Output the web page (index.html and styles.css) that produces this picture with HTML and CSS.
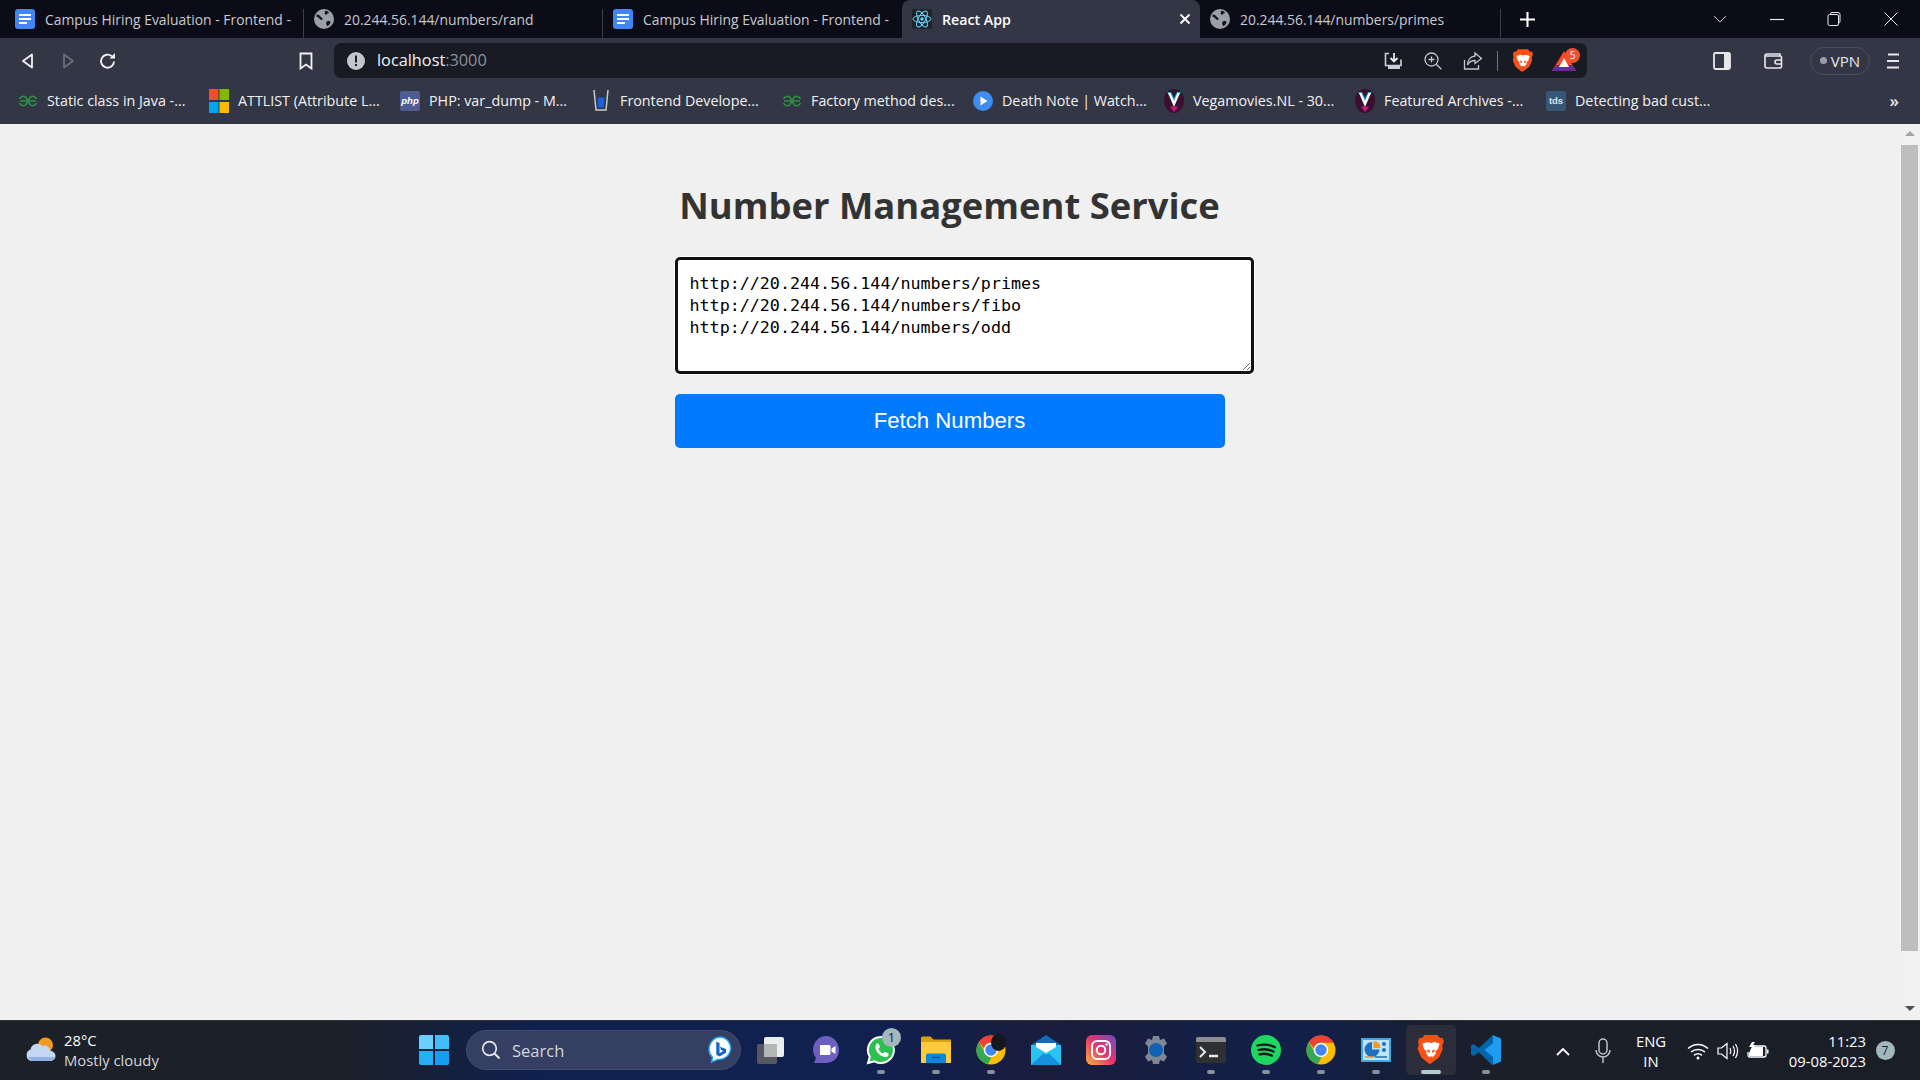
FILE: index.html
```html
<!DOCTYPE html>
<html lang="en">
<head>
  <meta charset="UTF-8">
  <meta name="viewport" content="width=device-width, initial-scale=1.0">
  <title>React App</title>
  <link rel="stylesheet" href="styles.css">
</head>
<body>

  <!-- shared icons -->
  <svg class="sprite" aria-hidden="true">
    <symbol id="i-doc" viewBox="0 0 20 20">
      <rect width="20" height="20" rx="3" fill="#4285f4"/>
      <path d="M4 5h12v2H4zM4 9h12v2H4zM4 13h8v2H4z" fill="#fff"/>
    </symbol>
    <symbol id="i-globe" viewBox="0 0 18 18">
      <circle cx="9" cy="9" r="9" fill="#9aa0a6"/>
      <path d="M2.500 5l2 .5 2 2 1.500 1-1 1.500-1.500-.5-1-1.500-2.500-1.500zM10 1.500l2.500.5 1 1.500-1.500.5-1 1.500-1.500-1zM11 11.500l2.500-1 1.500 1-1 2.500-2 1.500-1-2z" fill="#12141e"/>
    </symbol>
    <symbol id="i-gfg" viewBox="0 0 20 12">
      <path d="M2 6h16M1.500 4a4 4 0 0 1 6.500-1.500l4 7A4 4 0 0 0 18.500 8M18.500 4a4 4 0 0 0-6.500-1.500l-4 7A4 4 0 0 1 1.500 8" fill="none" stroke="#2f8d46" stroke-width="1.700"/>
    </symbol>
    <symbol id="i-vega" viewBox="0 0 20 24">
      <path d="M10 0c6 0 10 4 10 11 0 7-4 13-10 13S0 18 0 11C0 4 4 0 10 0z" fill="#3a1030"/>
      <path d="M3 3l4 0 3 6 3-6 4 0-7 11z" fill="#1f9ed8"/>
      <path d="M4 4h2.500l3.500 8 3.500-8H16l-6 14z" fill="#fff"/>
      <path d="M6 18l4 5 4-5-4-1z" fill="#c2187a"/>
    </symbol>
    <symbol id="i-brave" viewBox="0 0 24 28">
      <path d="M6 0h12l2 2.500 3 .5 1 3-1.500 4 .5 3-3.500 8-7.500 5.500-1 .5-1-.5L3 21-.5 13l1-3L0 6l1-3 3-.5z" fill="#fb4f16"/>
      <path d="M4 8l5-1.500 3 1 3-1L20 8l-1.500 5-2.500 2.500.5 2-3 3.500h-3l-3-3.500.5-2L5.500 13z" fill="#fff"/>
      <path d="M8.500 13.500l2.500 1v2l-2.500-1zM15.500 13.500l-2.500 1v2l2.500-1zM10 20h4l-2 2z" fill="#fb4f16"/>
    </symbol>
    <symbol id="i-chrome" viewBox="0 0 30 30">
      <circle cx="15" cy="15" r="14.500" fill="#fbbc04"/>
      <path d="M15 .5a14.500 14.500 0 0 1 12.600 7.300H15a7.200 7.200 0 0 0-7 5.500L2.800 7A14.500 14.500 0 0 1 15 .5z" fill="#ea4335"/>
      <path d="M2.800 7l6 10.800a7.200 7.200 0 0 0 6.800 4.400l-3.900 7A14.500 14.500 0 0 1 2.800 7z" fill="#34a853"/>
      <circle cx="15" cy="15" r="7.200" fill="#fff"/>
      <circle cx="15" cy="15" r="5.700" fill="#4285f4"/>
    </symbol>
  </svg>

  <header class="browser">
    <div class="tabstrip">
      <div class="tab">
        <svg class="tab-icon"><use href="#i-doc"/></svg>
        <span class="tab-title">Campus Hiring Evaluation - Frontend -</span>
      </div>
      <div class="tab">
        <svg class="tab-icon"><use href="#i-globe"/></svg>
        <span class="tab-title">20.244.56.144/numbers/rand</span>
      </div>
      <div class="tab tab-before-active">
        <svg class="tab-icon"><use href="#i-doc"/></svg>
        <span class="tab-title">Campus Hiring Evaluation - Frontend -</span>
      </div>
      <div class="tab tab-active">
        <svg class="tab-icon" viewBox="0 0 20 20">
          <rect width="20" height="20" rx="2" fill="#20232a"/>
          <g fill="none" stroke="#61dafb" stroke-width="1">
            <ellipse cx="10" cy="10" rx="9" ry="3.600"/>
            <ellipse cx="10" cy="10" rx="9" ry="3.600" transform="rotate(60 10 10)"/>
            <ellipse cx="10" cy="10" rx="9" ry="3.600" transform="rotate(120 10 10)"/>
          </g>
          <circle cx="10" cy="10" r="1.700" fill="#61dafb"/>
        </svg>
        <span class="tab-title">React App</span>
        <svg class="tab-close" viewBox="0 0 12 12"><path d="M1.500 1.500l9 9M10.500 1.500l-9 9" stroke="#fff" stroke-width="1.800"/></svg>
      </div>
      <div class="tab tab-last">
        <svg class="tab-icon"><use href="#i-globe"/></svg>
        <span class="tab-title">20.244.56.144/numbers/primes</span>
      </div>
      <svg class="new-tab" viewBox="0 0 16 16"><path d="M8 0v16M0 8h16" stroke="#fff" stroke-width="2.200"/></svg>
      <div class="window-controls">
        <svg class="win-btn" viewBox="0 0 14 14"><path d="M1 4l6 6 6-6" fill="none" stroke="#c8c8cc" stroke-width="1"/></svg>
        <svg class="win-btn" viewBox="0 0 14 14"><path d="M0 7.500h14" stroke="#e8e8ea" stroke-width="1.200"/></svg>
        <svg class="win-btn" viewBox="0 0 14 14"><path d="M3.500 2.500V2q0-1.500 1.500-1.500h6q2 0 2 2v7q0 1.500-1.500 1.500M2.500 2.500h7.500q1.500 0 1.500 1.500v8q0 1.500-1.500 1.500H2.500Q1 13.500 1 12V4q0-1.500 1.500-1.500z" fill="none" stroke="#e8e8ea" stroke-width="1"/></svg>
        <svg class="win-btn" viewBox="0 0 14 14"><path d="M.5.5l13 13M13.500.5l-13 13" stroke="#e8e8ea" stroke-width="1"/></svg>
      </div>
    </div>

    <div class="toolbar">
      <svg class="tool" viewBox="0 0 20 20"><path d="M14 3.500v13L5 10z" fill="none" stroke="#f2f2f4" stroke-width="1.800" stroke-linejoin="round"/></svg>
      <svg class="tool" viewBox="0 0 20 20"><path d="M6 3.500v13l9-6.500z" fill="none" stroke="#6b6e7a" stroke-width="1.800" stroke-linejoin="round"/></svg>
      <svg class="tool" viewBox="0 0 20 20"><path d="M16 10.500a6.500 6.500 0 1 1-2.200-5.200" fill="none" stroke="#f2f2f4" stroke-width="1.900"/><path d="M11.500 7.500h5.500v-5.500z" fill="#f2f2f4"/></svg>
      <svg class="tool tool-bookmark" viewBox="0 0 20 20"><path d="M4.500 2.500h11v15l-5.500-4-5.500 4z" fill="none" stroke="#f2f2f4" stroke-width="1.800"/></svg>

      <div class="addressbar">
        <svg class="addr-info" viewBox="0 0 18 18"><circle cx="9" cy="9" r="9" fill="#c4c6cc"/><path d="M8 3.500h2v7H8zM8 12h2v2H8z" fill="#181b24"/></svg>
        <span class="addr-url">localhost<span class="addr-port">:3000</span></span>
        <div class="addr-actions">
          <svg class="tool" viewBox="0 0 20 20"><path d="M6 2.500H2.500v12H18v-6" fill="none" stroke="#cfd0d5" stroke-width="1.600"/><path d="M11 2v8M7.500 7l3.500 3.500L14.500 7" fill="none" stroke="#e8e8ea" stroke-width="1.800"/><path d="M5 15h12v3H5z" fill="#cfd0d5"/></svg>
          <svg class="tool" viewBox="0 0 20 20"><circle cx="8.500" cy="8.500" r="6.500" fill="none" stroke="#c4c6cc" stroke-width="1.300"/><path d="M13.300 13.300l5 5M5.500 8.500h6M8.500 5.500v6" stroke="#c4c6cc" stroke-width="1.300"/></svg>
          <svg class="tool" viewBox="0 0 20 20"><path d="M1.500 9v9h14v-4" fill="none" stroke="#c4c6cc" stroke-width="1.300"/><path d="M12 2l6.500 5.500L12 12.500V9.500c-3.500 0-6 1.500-7.500 4.500 0-5 3-8.500 7.500-9z" fill="none" stroke="#c4c6cc" stroke-width="1.300"/></svg>
          <span class="addr-sep"></span>
          <span class="tool"><svg class="brave-small"><use href="#i-brave"/></svg></span>
          <span class="tool bat">
            <svg class="bat-icon" viewBox="0 0 24 20"><path d="M12 0l12 20H0z" fill="#ff4724"/><path d="M0 20l4-6h16l4 6z" fill="#662d91"/><path d="M12 7l5 9H7z" fill="#fff"/></svg>
            <span class="bat-badge">5</span>
          </span>
        </div>
      </div>

      <svg class="tool tool-panel" viewBox="0 0 20 20"><rect x="2" y="2" width="16" height="16" rx="1.500" fill="none" stroke="#e8e8ea" stroke-width="1.800"/><path d="M12 2h6v16h-6z" fill="#e8e8ea"/></svg>
      <svg class="tool tool-wallet" viewBox="0 0 20 20"><path d="M17 4.500V3H4Q2 3 2 5v10q0 2 2 2h13q1.500 0 1.500-1.500v-9Q18.500 5 17 5H2" fill="none" stroke="#e8e8ea" stroke-width="1.600"/><path d="M18 9h-4a2 2 0 0 0 0 4h4" fill="none" stroke="#e8e8ea" stroke-width="1.600"/></svg>
      <div class="vpn"><span class="vpn-dot"></span>VPN</div>
      <svg class="tool tool-menu" viewBox="0 0 20 20"><path d="M5 3.500h11M4 10h12M4 16.500h12" stroke="#e8e8ea" stroke-width="1.800"/></svg>
    </div>

    <div class="bookmarks">
      <a class="bookmark"><svg class="bm-icon bm-gfg"><use href="#i-gfg"/></svg>Static class in Java -...</a>
      <a class="bookmark">
        <svg class="bm-icon" viewBox="0 0 20 24"><path d="M0 0h9.500v11H0z" fill="#f25022"/><path d="M10.500 0H20v11h-9.500z" fill="#7fba00"/><path d="M0 13h9.500v11H0z" fill="#00a4ef"/><path d="M10.500 13H20v11h-9.500z" fill="#ffb900"/></svg>ATTLIST (Attribute L...</a>
      <a class="bookmark"><span class="bm-icon bm-php">php</span>PHP: var_dump - M...</a>
      <a class="bookmark">
        <svg class="bm-icon" viewBox="0 0 20 24"><path d="M3 1l2 20h10l2-20" fill="none" stroke="#c9ccd4" stroke-width="1.500"/><path d="M6.500 8.500h7l-.7 10H7.200z" fill="#1a5fe0"/></svg>Frontend Develope...</a>
      <a class="bookmark"><svg class="bm-icon bm-gfg"><use href="#i-gfg"/></svg>Factory method des...</a>
      <a class="bookmark">
        <svg class="bm-icon" viewBox="0 0 20 20"><circle cx="10" cy="10" r="10" fill="#3f8cf2"/><path d="M7.500 5.500l7 4.500-7 4.500z" fill="#fff"/></svg>Death Note | Watch...</a>
      <a class="bookmark"><svg class="bm-icon"><use href="#i-vega"/></svg>Vegamovies.NL - 30...</a>
      <a class="bookmark"><svg class="bm-icon"><use href="#i-vega"/></svg>Featured Archives -...</a>
      <a class="bookmark"><span class="bm-icon bm-tds">tds</span>Detecting bad cust...</a>
      <span class="bm-more">»</span>
    </div>
  </header>

  <div class="viewport">
    <main class="page">
      <div class="container">
        <h1>Number Management Service</h1>
        <textarea class="urls" spellcheck="false">http://20.244.56.144/numbers/primes
http://20.244.56.144/numbers/fibo
http://20.244.56.144/numbers/odd</textarea>
        <button class="fetch" type="button">Fetch Numbers</button>
      </div>
    </main>
    <div class="scrollbar">
      <span class="arrow-up"></span>
      <span class="thumb"></span>
      <span class="arrow-down"></span>
    </div>
  </div>

  <footer class="taskbar">
    <div class="weather">
      <svg class="weather-icon" viewBox="0 0 32 30">
        <circle cx="21" cy="10" r="7.500" fill="#f29a1f"/>
        <path d="M7 26a6 6 0 0 1-1-11.500A7 7 0 0 1 18 11a6 6 0 0 1 8 5 5 5 0 0 1 0 10z" fill="#c3d6f2"/>
        <path d="M7 26a6 6 0 0 1-3-4h26a5 5 0 0 1-4 4z" fill="#8fb0e6"/>
      </svg>
      <div class="weather-text">
        <span class="temp">28°C</span>
        <span class="cond">Mostly cloudy</span>
      </div>
    </div>

    <svg class="start" viewBox="0 0 30 30">
      <path d="M0 2q0-2 2-2h12v14H0z" fill="#6ad0fb"/>
      <path d="M16 0h12q2 0 2 2v12H16z" fill="#43bdf8"/>
      <path d="M0 16h14v14H2q-2 0-2-2z" fill="#25b0f7"/>
      <path d="M16 16h14v12q0 2-2 2H16z" fill="#1a9cf2"/>
    </svg>

    <div class="search">
      <svg class="search-icon" viewBox="0 0 20 20"><circle cx="8.500" cy="8.500" r="6.800" fill="none" stroke="#e8e8ea" stroke-width="1.700"/><path d="M13.500 13.500l5 5" stroke="#e8e8ea" stroke-width="1.900"/></svg>
      <span class="search-label">Search</span>
      <svg class="bing" viewBox="0 0 26 30">
        <path d="M13 1a12 12 0 0 1 11 15c-1.500 6-7 9.500-13 9l-7 3 1-5A13 13 0 0 1 13 1z" fill="#fff" stroke="#1ea5f5" stroke-width="1.500"/>
        <path d="M9 6l3.500 1.500v11l4-2.500-2.500-1-1-3.500 6.500 2.500v4L12.500 22 9 20z" fill="#1467c8"/>
      </svg>
    </div>

    <div class="tasks">
      <div class="task">
        <svg class="task-icon" viewBox="0 0 30 30">
          <rect x="1" y="9" width="20" height="20" rx="2" fill="#55585e"/>
          <rect x="8" y="2" width="20" height="20" rx="2" fill="#eceded"/>
          <rect x="8" y="9" width="13" height="13" fill="#b5b6b8"/>
        </svg>
      </div>
      <div class="task">
        <svg class="task-icon" viewBox="0 0 30 30">
          <path d="M15 1c7 0 13 6 13 14s-6 13-13 13H3l2-5C3 20 2 18 2 15 2 7 8 1 15 1z" fill="#6d5fbf"/>
          <path d="M9 10h9q1.500 0 1.500 1.500v7q0 1.500-1.500 1.500H9z" fill="#fff"/>
          <path d="M20.500 13.500l4-2.500v8l-4-2.500z" fill="#fff"/>
        </svg>
      </div>
      <div class="task task-open task-badged">
        <svg class="task-icon" viewBox="0 0 30 30">
          <path d="M15 2a13 13 0 1 1-6.500 24.300L2 28l1.800-6.300A13 13 0 0 1 15 2z" fill="#2bc14f" stroke="#fff" stroke-width="2"/>
          <path d="M10.500 8.500l2 0 1.500 3.500-1.500 2c1 2 2.500 3.500 4.500 4.500l2-1.700 3.500 1.700v2c-1 1.500-3 2-5 1.300-4-1.300-7-4.500-8-8.300-.4-2 .5-3.800 1-5z" fill="#fff"/>
        </svg>
        <span class="task-badge">1</span>
        <span class="indicator"></span>
      </div>
      <div class="task task-open">
        <svg class="task-icon" viewBox="0 0 30 30">
          <path d="M0 3q0-1.500 1.500-1.500h8l3 3H30v6H0z" fill="#dca10d"/>
          <path d="M0 7h30v21H0z" fill="#ffcb3d"/>
          <path d="M5 20q0-1.500 1.500-1.500h17Q25 18.500 25 20v8H5z" fill="#0f87d8"/>
          <path d="M11 22.500h8" stroke="#084f93" stroke-width="1.300"/>
        </svg>
        <span class="indicator"></span>
      </div>
      <div class="task task-open">
        <svg class="task-icon"><use href="#i-chrome"/></svg>
        <span class="chrome-blob"></span>
        <span class="indicator"></span>
      </div>
      <div class="task">
        <svg class="task-icon" viewBox="0 0 30 30">
          <path d="M0 10L15 0l15 10v20H0z" fill="#0f6cbd"/>
          <path d="M0 10h30v20H0z" fill="#29c3f2"/>
          <path d="M5 8h20v4l-10 6-10-6z" fill="#fff"/>
          <path d="M0 30l12-11.500 3 1.500 3-1.500L30 30z" fill="#1490df"/>
        </svg>
      </div>
      <div class="task">
        <svg class="task-icon" viewBox="0 0 30 30">
          <defs>
            <linearGradient id="ig" x1="0" y1="1" x2="1" y2="0">
              <stop offset="0" stop-color="#fdb23a"/>
              <stop offset="0.5" stop-color="#e8336e"/>
              <stop offset="1" stop-color="#6b4cc4"/>
            </linearGradient>
          </defs>
          <rect width="30" height="30" rx="6" fill="url(#ig)"/>
          <rect x="6" y="6" width="18" height="18" rx="5" fill="none" stroke="#fff" stroke-width="2"/>
          <circle cx="15" cy="15" r="4.300" fill="none" stroke="#fff" stroke-width="2"/>
          <circle cx="20.500" cy="9.500" r="1.200" fill="#fff"/>
        </svg>
      </div>
      <div class="task">
        <svg class="task-icon" viewBox="0 0 30 30">
          <path d="M12 1h6l1 4 4-1.500 3 5-3 3v7l3 3-3 5-4-1.500-1 4h-6l-1-4-4 1.500-3-5 3-3v-7l-3-3 3-5L11 5z" fill="#7d8894"/>
          <circle cx="15" cy="15" r="7" fill="#0f62b5"/>
        </svg>
      </div>
      <div class="task task-open">
        <svg class="task-icon" viewBox="0 0 30 30">
          <rect y="2" width="30" height="26" rx="2" fill="#2e3033"/>
          <path d="M2 2h26q2 0 2 2v3H0V4q0-2 2-2z" fill="#8b8d90"/>
          <path d="M4 12l5 5-5 5" fill="none" stroke="#e8e8e8" stroke-width="2"/>
          <path d="M13 21h9" stroke="#e8e8e8" stroke-width="2.500"/>
        </svg>
        <span class="indicator"></span>
      </div>
      <div class="task task-open">
        <svg class="task-icon" viewBox="0 0 30 30">
          <circle cx="15" cy="15" r="15" fill="#1ed760"/>
          <path d="M6.500 10.500c6-1.500 12.500-1 17.500 1.800M7.500 15c5-1.300 10.500-.8 15 1.600M8.500 19.300c4.300-1 8.700-.6 12.500 1.400" fill="none" stroke="#10171a" stroke-width="2.300" stroke-linecap="round"/>
        </svg>
        <span class="indicator"></span>
      </div>
      <div class="task task-open">
        <svg class="task-icon"><use href="#i-chrome"/></svg>
        <span class="indicator"></span>
      </div>
      <div class="task task-open">
        <svg class="task-icon" viewBox="0 0 30 30">
          <rect y="3" width="30" height="24" fill="#3fa9e8"/>
          <rect x="2" y="5" width="26" height="20" fill="#bfe4f8"/>
          <path d="M11 7a7.500 7.500 0 1 0 7.500 7.500H11z" fill="#1d6fc0"/>
          <path d="M12.500 6a7 7 0 0 1 7 7h-7z" fill="#f29a1f"/>
          <circle cx="23" cy="9" r="2" fill="#1d6fc0"/>
          <circle cx="23" cy="15" r="2" fill="#1d6fc0"/>
          <path d="M4 22h8" stroke="#f29a1f" stroke-width="1.500"/>
          <path d="M14 22h12" stroke="#1d6fc0" stroke-width="1.500"/>
        </svg>
        <span class="indicator"></span>
      </div>
      <div class="task task-open task-active">
        <svg class="task-icon"><use href="#i-brave"/></svg>
        <span class="indicator"></span>
      </div>
      <div class="task task-open">
        <svg class="task-icon" viewBox="0 0 30 30">
          <path d="M21.500 0L30 3.500v23L21.500 30 8 17l14-11z" fill="#1f9cf0"/>
          <path d="M22 0L8 13 2.500 9 0 10.500v9L2.500 21 8 17l14 13v-8l-8.500-7L22 8z" fill="#0065a9"/>
        </svg>
        <span class="indicator"></span>
      </div>
    </div>

    <div class="tray">
      <svg class="tray-slot tray-chevron" viewBox="0 0 40 14"><path d="M14 11l6-6 6 6" fill="none" stroke="#fff" stroke-width="1.800"/></svg>
      <svg class="tray-slot tray-mic" viewBox="0 0 40 26"><rect x="16" y="1" width="8" height="15" rx="4" fill="none" stroke="#b9c4c8" stroke-width="1.500"/><path d="M13 12a7 7 0 0 0 14 0M20 19v6" fill="none" stroke="#b9c4c8" stroke-width="1.500"/></svg>
      <div class="lang"><span>ENG</span><span>IN</span></div>
      <svg class="tray-icon tray-wifi" viewBox="0 0 22 18"><path d="M1 6.500c6-5.500 14-5.500 20 0M4 10c4-3.500 10-3.500 14 0M7 13.300c2.400-1.900 5.600-1.900 8 0" fill="none" stroke="#fff" stroke-width="1.500"/><circle cx="11" cy="16" r="1.500" fill="#fff"/></svg>
      <svg class="tray-icon" viewBox="0 0 22 18"><path d="M1 6h3.500L10 1.500v15L4.500 12H1z" fill="none" stroke="#fff" stroke-width="1.200"/><path d="M13 6c1 2 1 4 0 6M16 4c1.800 3 1.800 7 0 10M18.500 2c2.700 4.500 2.700 9.500 0 14" fill="none" stroke="#fff" stroke-width="1.200"/></svg>
      <svg class="tray-icon" viewBox="0 0 22 18"><path d="M5 4h12q2 0 2 2v7q0 2-2 2H3q-2 0-2-2v-3" fill="none" stroke="#fff" stroke-width="1.300"/><path d="M2 11l3-6h11v9H2z" fill="#fff"/><path d="M20 7.500h1.500v4H20z" fill="#fff"/><path d="M5 0L2 5h3L3 9l6-6H6l2-3z" fill="#fff"/></svg>
      <div class="clock"><span>11:23</span><span>09-08-2023</span></div>
      <span class="notif">7</span>
    </div>
  </footer>

</body>
</html>
```

FILE: styles.css
```css
* {
  box-sizing: border-box;
}
html, body {
  margin: 0;
  height: 100%;
}
body {
  width: 1920px;
  height: 1080px;
  overflow: hidden;
  display: flex;
  flex-direction: column;
  font-family: "Open Sans", "Noto Sans", sans-serif;
  background: #f0f0f0;
}
svg {
  flex: none;
  display: block;
}
.sprite {
  width: 0;
  height: 0;
}

/* browser chrome */
.browser {
  background: #333644;
  flex: none;
}
.tabstrip {
  height: 38px;
  padding-left: 5px;
  display: flex;
  align-items: center;
  background: #0b0c17;
}
.tab {
  width: 299px;
  height: 38px;
  padding-left: 10px;
  display: flex;
  align-items: center;
  gap: 10px;
  color: #c9cad0;
  font-size: 13.9px;
  position: relative;
}
.tab::after {
  content: "";
  position: absolute;
  right: 0;
  top: 9px;
  bottom: 0;
  width: 1px;
  background: #3c3e4a;
}
.tab-before-active::after,
.tab-active::after {
  display: none;
}
.tab-active {
  width: 298px;
  background: #333644;
  color: #fff;
  font-size: 14.2px;
  font-weight: 600;
  border-radius: 8px 8px 0 0;
}
.tab-last {
  width: 301px;
}
.tab-icon {
  width: 20px;
  height: 20px;
}
.tab-title {
  white-space: nowrap;
  overflow: hidden;
}
.tab-close {
  width: 12px;
  height: 12px;
  margin-left: auto;
  margin-right: 9px;
}
.new-tab {
  width: 15px;
  height: 15px;
  margin-left: 19px;
}
.window-controls {
  margin-left: auto;
  display: flex;
  align-items: center;
  gap: 43px;
  padding-right: 22px;
}
.win-btn {
  width: 14px;
  height: 14px;
}

.toolbar {
  height: 44px;
  padding: 5px 0 4px 8px;
  display: flex;
  align-items: center;
}
.tool {
  width: 40px;
  height: 20px;
  display: flex;
  justify-content: center;
  align-items: center;
  position: relative;
}
.tool-bookmark {
  margin-left: 158px;
}
.addressbar {
  width: 1253px;
  height: 35px;
  margin-left: 8px;
  padding: 0 3px 0 13px;
  display: flex;
  align-items: center;
  background: #181b24;
  border-radius: 7px;
}
.addr-info {
  width: 18px;
  height: 18px;
}
.addr-url {
  margin: -2px 0 0 12px;
  font-size: 16.3px;
  color: #f2f2f4;
}
.addr-port {
  color: #8d8f98;
}
.addr-actions {
  margin-left: auto;
  display: flex;
  align-items: center;
}
.addr-sep {
  width: 1px;
  height: 20px;
  margin: 0 5px 0 4px;
  background: #70727c;
}
.brave-small {
  width: 20px;
  height: 24px;
}
.bat {
  margin-left: 1.500px;
}
.bat-icon {
  width: 24px;
  height: 20px;
}
.bat-badge {
  position: absolute;
  top: -3px;
  right: 4px;
  width: 15px;
  height: 15px;
  border-radius: 50%;
  background: #f0502c;
  color: #fff;
  font-size: 10px;
  line-height: 15px;
  text-align: center;
}
.tool-panel {
  margin-left: 115px;
}
.tool-wallet {
  margin-left: 11px;
}
.vpn {
  width: 60px;
  height: 28px;
  margin-left: 17px;
  display: flex;
  align-items: center;
  justify-content: center;
  gap: 4px;
  border: 1.500px solid #4c4f5e;
  border-radius: 14px;
  color: #e8e8ea;
  font-size: 15px;
}
.vpn-dot {
  width: 7px;
  height: 7px;
  border-radius: 50%;
  background: #9a9ca6;
}
.tool-menu {
  margin-left: 3px;
}

.bookmarks {
  height: 42px;
  padding: 0 21px 5px 18px;
  display: flex;
  align-items: center;
}
.bookmark {
  width: 191px;
  display: flex;
  align-items: center;
  gap: 9px;
  color: #f2f2f4;
  font-size: 14.3px;
  white-space: nowrap;
}
.bm-icon {
  width: 20px;
  height: 24px;
  flex: none;
}
.bm-gfg {
  height: 12px;
}
.bm-php, .bm-tds {
  height: 20px;
  border-radius: 2px;
  color: #fff;
  font-family: "Liberation Sans", sans-serif;
  font-size: 9.500px;
  font-weight: bold;
  line-height: 20px;
  text-align: center;
}
.bm-php {
  background: #4f5b93;
  font-style: italic;
}
.bm-tds {
  background: #355876;
  color: #d8e4ec;
}
.bm-more {
  margin-left: auto;
  color: #e8e8ea;
  font-size: 17px;
  font-weight: 600;
  line-height: 20px;
}

/* the page itself */
.viewport {
  flex: 1;
  display: flex;
  min-height: 0;
}
.page {
  width: 1899px;
  display: flex;
  justify-content: center;
}
.container {
  width: 550px;
  padding-top: 54px;
}
h1 {
  margin: 0 0 25px;
  color: #333;
  font-size: 36.400px;
  font-weight: 700;
  line-height: 54px;
  text-align: center;
  white-space: nowrap;
}
.urls {
  display: block;
  width: 579px;
  height: 117px;
  padding: 12px 12px 8px;
  background: #fff;
  border: 3px solid #111;
  border-radius: 5px;
  box-shadow: 0 0 0 1px #fff;
  color: #000;
  font-family: "DejaVu Sans Mono", "Liberation Mono", monospace;
  font-size: 16.7px;
  line-height: 22px;
  outline: none;
}
.fetch {
  display: block;
  width: 100%;
  height: 54px;
  margin-top: 20px;
  background: #007bff;
  border: none;
  border-radius: 5px;
  color: #fff;
  font-family: "Liberation Sans", Arial, sans-serif;
  font-size: 22.200px;
  cursor: pointer;
}
.fetch:hover {
  background: #0069d9;
}
.scrollbar {
  width: 21px;
  padding: 7px 2px 7px 2px;
  display: flex;
  flex-direction: column;
  align-items: center;
  background: #f1f1f1;
}
.arrow-up, .arrow-down {
  width: 0;
  height: 0;
  border-left: 5px solid transparent;
  border-right: 5px solid transparent;
}
.arrow-up {
  border-bottom: 5px solid #a3a3a3;
}
.arrow-down {
  border-top: 5px solid #505050;
}
.thumb {
  width: 17px;
  height: 806px;
  margin: 9px 0 55px;
  background: #bebebe;
}

/* windows taskbar */
.taskbar {
  flex: none;
  height: 60px;
  display: flex;
  border-top: 1px solid #33353f;
  background: linear-gradient(90deg, #1b2029 0, #1b2029 340px, #10204f 540px, #10204f 880px, #1a1d3c 1050px, #12204a 1300px, #1a1f2a 1480px, #1a1e27 100%);
  color: #fff;
}
.weather {
  width: 419px;
  padding: 0 0 2px 23px;
  display: flex;
  align-items: center;
  gap: 6px;
}
.weather-icon {
  width: 35px;
  height: 30px;
}
.weather-text {
  display: flex;
  flex-direction: column;
  font-size: 14.800px;
  line-height: 20px;
}
.cond {
  color: #d4d6da;
}
.start {
  width: 30px;
  height: 30px;
  margin: 14px 0 0;
}
.search {
  width: 275px;
  height: 40px;
  margin: 9px 0 0 17px;
  padding: 0 7px 0 14px;
  display: flex;
  align-items: center;
  background: #353f63;
  border: 1px solid #414b6e;
  border-radius: 20px;
}
.search-icon {
  width: 20px;
  height: 20px;
}
.search-label {
  margin-left: 11px;
  color: #d4d6da;
  font-size: 16.500px;
}
.bing {
  width: 26px;
  height: 28px;
  margin-left: auto;
}
.tasks {
  margin-left: 2.500px;
  display: flex;
}
.task {
  width: 50px;
  height: 50px;
  margin: 4px 2.500px 0;
  padding-top: 10px;
  display: flex;
  flex-direction: column;
  align-items: center;
  position: relative;
  border-radius: 5px;
}
.task-icon {
  width: 30px;
  height: 30px;
}
.indicator {
  width: 8px;
  height: 4px;
  margin-top: 5px;
  background: #8a909c;
  border-radius: 2px;
}
.task-active {
  background: #2b2e3a;
}
.task-active .indicator {
  width: 20px;
  background: #b5cdd2;
}
.task-badge {
  position: absolute;
  top: 3px;
  right: 5px;
  width: 19px;
  height: 19px;
  border-radius: 50%;
  background: #a3b8bd;
  color: #1b2029;
  font-size: 13px;
  line-height: 19px;
  text-align: center;
}
.chrome-blob {
  position: absolute;
  top: 9px;
  right: 10px;
  width: 15px;
  height: 17px;
  border-radius: 50%;
  background: #15171c;
}
.tray {
  margin-left: 29.500px;
  display: flex;
  align-items: center;
}
.tray-slot {
  width: 40px;
}
.tray-chevron {
  height: 14px;
}
.tray-mic {
  height: 26px;
}
.lang {
  width: 56px;
  display: flex;
  flex-direction: column;
  align-items: center;
  font-size: 14.800px;
  line-height: 20px;
}
.tray-icon {
  width: 22px;
  height: 18px;
  margin: 0 4px;
}
.tray-wifi {
  margin-left: 8px;
}
.clock {
  width: 93px;
  display: flex;
  flex-direction: column;
  align-items: flex-end;
  font-size: 14.800px;
  line-height: 20px;
}
.notif {
  width: 19px;
  height: 19px;
  margin-left: 9.500px;
  border-radius: 50%;
  background: #a3b8bd;
  color: #1b2029;
  font-size: 12px;
  line-height: 19px;
  text-align: center;
}
```
